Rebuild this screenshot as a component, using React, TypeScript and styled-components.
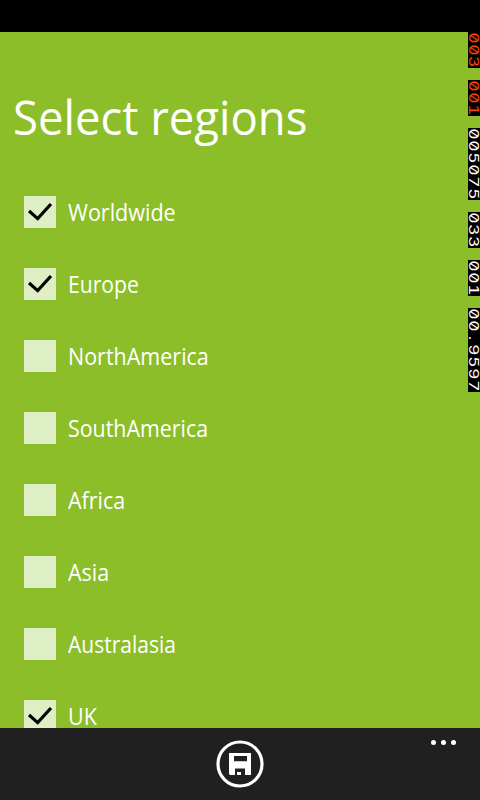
import React from "react";
import styled, { createGlobalStyle } from "styled-components";

const GlobalStyle = createGlobalStyle`
  body { margin: 0; background: #000; font-family: "Open Sans", "Noto Sans", sans-serif; color: #fff; }
`;

const Phone = styled.div`
  position: relative;
  width: 480px;
  height: 800px;
  display: flex;
  flex-direction: column;
  overflow: hidden;
  background: #000;
`;

const StatusBar = styled.div`
  flex: 0 0 32px;
  background: #000;
`;

const Page = styled.main`
  flex: 1;
  min-height: 0;
  overflow: hidden;
  background: #8cbe29;
`;

const Title = styled.h1`
  margin: 50px 0 0 13px;
  height: 70px;
  line-height: 69px;
  font-size: 48px;
  font-weight: 400;
  white-space: nowrap;
  width: max-content;
  transform: scaleX(0.947);
  transform-origin: left;
`;

const List = styled.ul`
  list-style: none;
  margin: 0;
  padding: 24px 0 0 24px;
`;

const Row = styled.li`
  height: 72px;
  display: flex;
  align-items: center;
  gap: 12px;
`;

const Box = styled.span`
  width: 32px;
  height: 32px;
  background: #deefc6;
  svg { display: block; }
`;

const Label = styled.span<{ $stretch: number }>`
  font-size: 23.5px;
  line-height: 32px;
  white-space: nowrap;
  transform: scaleX(${(p) => p.$stretch});
  transform-origin: left;
`;

const AppBar = styled.footer`
  position: relative;
  flex: 0 0 72px;
  display: flex;
  justify-content: center;
  align-items: center;
  background: #212021;
`;

const SaveButton = styled.button`
  width: 48px;
  height: 48px;
  padding: 0;
  border: 0;
  background: none;
  svg { display: block; }
`;

const More = styled.div`
  position: absolute;
  right: 24px;
  top: 12px;
  display: flex;
  gap: 5px;
`;

const Dot = styled.i`
  width: 5px;
  height: 5px;
  border-radius: 50%;
  background: #fff;
`;

const Counters = styled.div`
  position: absolute;
  top: 32px;
  right: 0;
  display: flex;
  flex-direction: column;
  gap: 12px;
`;

const Counter = styled.div<{ $color: string }>`
  width: 12px;
  background: #000;
  color: ${(p) => p.$color};
`;

const Digit = styled.span`
  display: flex;
  align-items: center;
  justify-content: center;
  width: 12px;
  height: 12px;
  font: 400 13px/12px Inter, sans-serif;
  font-feature-settings: "zero" 1, "tnum" 1;
  transform: translateX(-0.5px) rotate(90deg) scaleX(1.34);
`;

const regions = [
  { name: "Worldwide", on: true, stretch: 0.917 },
  { name: "Europe", on: true, stretch: 0.9 },
  { name: "NorthAmerica", on: false, stretch: 0.915 },
  { name: "SouthAmerica", on: false, stretch: 0.91 },
  { name: "Africa", on: false, stretch: 0.915 },
  { name: "Asia", on: false, stretch: 0.915 },
  { name: "Australasia", on: false, stretch: 0.895 },
  { name: "UK", on: true, stretch: 0.915 },
];

const counters = [
  { value: "003", color: "#ff4500" },
  { value: "001", color: "#ff4500" },
  { value: "005075", color: "#fff" },
  { value: "033", color: "#fff" },
  { value: "001", color: "#fff" },
  { value: "00.9597", color: "#fff" },
];

const Check = () => (
  <svg width="32" height="32" viewBox="0 0 32 32">
    <path d="M5 15 L13.7 22.6 L27 8" fill="none" stroke="#000" strokeWidth="3.2" />
  </svg>
);

const Save = () => (
  <svg width="48" height="48" viewBox="0 0 48 48">
    <circle cx="24" cy="24" r="22" fill="none" stroke="#fff" strokeWidth="3.2" />
    <path
      fill="#fff"
      fillRule="evenodd"
      d="M13 13H35V35H14L13 34ZM18 16V21.3H31V16ZM19 28.5V35H29V28.5ZM21 32H25V35H21Z"
    />
  </svg>
);

export default function App() {
  return (
    <Phone>
      <GlobalStyle />
      <StatusBar />
      <Page>
        <Title>Select regions</Title>
        <List>
          {regions.map((r) => (
            <Row key={r.name}>
              <Box>{r.on && <Check />}</Box>
              <Label $stretch={r.stretch}>{r.name}</Label>
            </Row>
          ))}
        </List>
      </Page>
      <AppBar>
        <SaveButton aria-label="Save">
          <Save />
        </SaveButton>
        <More>
          <Dot />
          <Dot />
          <Dot />
        </More>
      </AppBar>
      <Counters>
        {counters.map((c, i) => (
          <Counter key={i} $color={c.color}>
            {c.value.split("").map((d, j) => (
              <Digit key={j}>{d}</Digit>
            ))}
          </Counter>
        ))}
      </Counters>
    </Phone>
  );
}
